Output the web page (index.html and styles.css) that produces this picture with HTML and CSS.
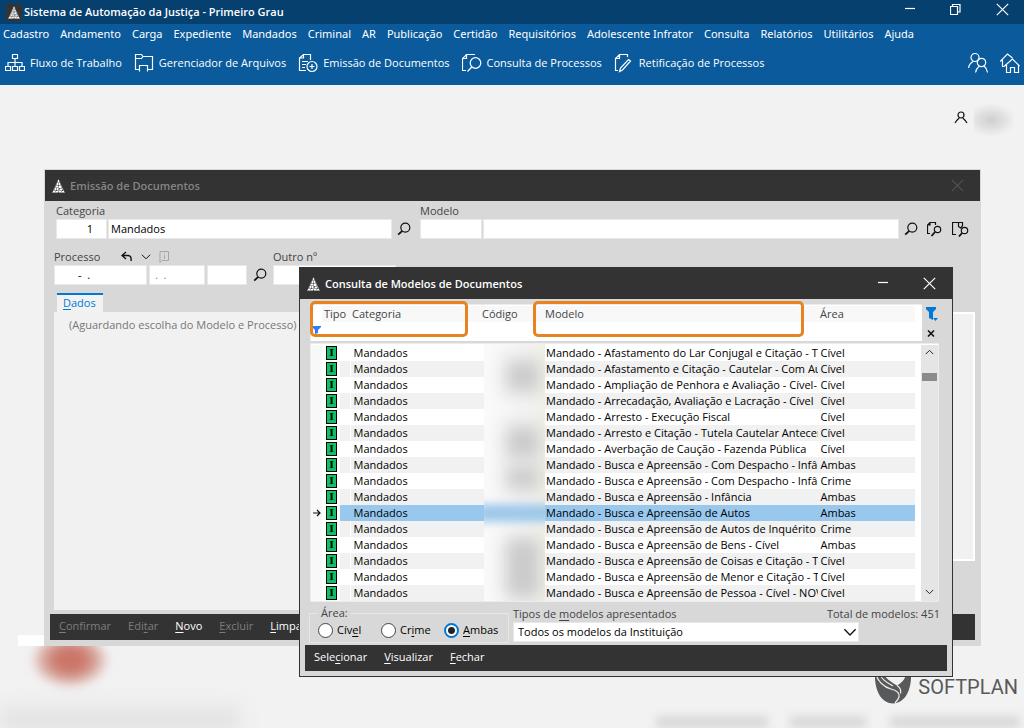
FILE: index.html
```html
<!DOCTYPE html>
<html lang="pt-BR">
<head>
<meta charset="utf-8">
<title>Sistema de Automação da Justiça - Primeiro Grau</title>
<link rel="stylesheet" href="styles.css">
</head>
<body>
<svg class="defs" aria-hidden="true">
  <symbol id="tri" viewBox="0 0 13 14"><path d="M6.5 0L13 14H0z" fill="#a2a2a2"/><path d="M6 1h1v2H6zM5 4h1v2H5zM7 4h1v2H7zM4 7h2v1H4zM7 7h2v2H7zM3 9h1v2H3zM5 9h1v2H5zM8 10h2v1H8zM1 12h2v1H1zM4 12h2v1H4zM7 12h2v1H7zM10 12h2v1h-2z" fill="#fff"/><path d="M6 6h1v1H6zM4 11h1v1H4zM7 9h1v1H7zM6 13h1v1H6zM10 11h1v1h-1z" fill="#555"/></symbol>
  <symbol id="lens" viewBox="0 0 14 14"><circle cx="8.300" cy="5.600" r="4.500"/><path d="M5.300 8.800L1.200 12.600" stroke-width="1.800"/></symbol>
  <symbol id="close" viewBox="0 0 13 13"><path d="M.8.8l11.400 11.400M12.200.8L.8 12.200"/></symbol>
  <symbol id="min" viewBox="0 0 10 13"><path d="M0 5.500h10"/></symbol>
  <symbol id="down" viewBox="0 0 12 8"><path d="M1 1.200l5 5 5-5"/></symbol>
</svg>

<header class="app">
  <div class="app-title">
    <span class="app-logo"><svg width="12" height="13"><use href="#tri"/></svg></span>
    <h1>Sistema de Automação da Justiça - Primeiro Grau</h1>
    <div class="app-controls">
      <button aria-label="Minimizar"><svg class="ln" width="10" height="13"><use href="#min"/></svg></button>
      <button aria-label="Restaurar"><svg class="ln" width="11" height="13" viewBox="0 0 11 13"><path d="M.5 3.500h7v8h-7zM2.500 3.500v-2h7.500v7.500H7.500"/></svg></button>
      <button aria-label="Fechar"><svg class="ln" width="13" height="13"><use href="#close"/></svg></button>
    </div>
  </div>
  <nav class="menu">
    <a href="#">Cadastro</a><a href="#">Andamento</a><a href="#">Carga</a><a href="#">Expediente</a><a href="#">Mandados</a><a href="#">Criminal</a><a href="#">AR</a><a href="#">Publicação</a><a href="#">Certidão</a><a href="#">Requisitórios</a><a href="#">Adolescente Infrator</a><a href="#">Consulta</a><a href="#">Relatórios</a><a href="#">Utilitários</a><a href="#">Ajuda</a>
  </nav>
  <div class="toolbar">
    <button><svg class="ln" width="20" height="20" viewBox="0 0 20 20"><path d="M7.500 1.500h5v4h-5zM.5 13.500h5v4h-5zM7.500 13.500h5v4h-5zM14.500 13.500h5v4h-5zM10 5.500v8M3 13.500v-4h14v4"/></svg>Fluxo de Trabalho</button>
    <button><svg class="ln" width="20" height="20" viewBox="0 0 20 20"><path d="M5 16.500H1.500v-15h6l1.500 2h9.500v13H14M1.500 5.500h6l1.500-2M5.500 18.500v-6h8v6"/></svg>Gerenciador de Arquivos</button>
    <button><svg class="ln" width="20" height="20" viewBox="0 0 20 20"><path d="M8 17.500H1.500V5l4-3.500h7V7M5.500 1.500V5h-4M4 8.500h6M4 11.500h4M4 14.500h3"/><circle cx="14" cy="13.500" r="5"/><path d="M11.500 13.500h5M14 11v5"/></svg>Emissão de Documentos</button>
    <button><svg class="ln" width="20" height="20" viewBox="0 0 20 20"><path d="M4 17.500H.5V5.500l4-4H13M4.500 1.500v4h-4"/><circle cx="13.500" cy="10" r="5.300"/><path d="M9.800 14L5.500 18.500"/></svg>Consulta de Processos</button>
    <button><svg class="ln" width="20" height="20" viewBox="0 0 20 20"><path d="M4 17.500H1.500V5.500l4-4h8V4M5.500 1.500v4h-4M14.500 6.500l2 1.500-8 9-3 1.500 1-3.500z"/></svg>Retificação de Processos</button>
    <span class="toolbar-right">
      <button aria-label="Usuários"><svg class="ln" width="20" height="20" viewBox="0 0 20 20"><circle cx="7" cy="4.500" r="4"/><circle cx="13.500" cy="9.500" r="4.200"/><path d="M.5 15c.5-3 2-5 4.500-6.500M7.500 19.500c.5-3 1.500-4.500 3.500-6M16 13c2 1.500 3 3.500 3.500 6.500"/></svg></button>
      <button aria-label="Início"><svg class="ln" width="20" height="20" viewBox="0 0 20 20"><path d="M4.500 13.500h-2v-6L.5 8l7-7 5 4M4.500 13l8-7 7 7M6.500 12v7.500h4v-5h4v5h4V12"/></svg></button>
    </span>
  </div>
</header>

<main class="desktop">
  <div class="user"><svg class="dark" width="14" height="13" viewBox="0 0 14 13"><circle cx="7" cy="4" r="3"/><path d="M1 12c1.500-2.500 2.500-3.500 4.200-5M13 12c-1.500-2.500-2.500-3.500-4.200-5"/></svg><span class="user-name"></span></div>
  <span class="smudge red"></span><span class="smudge left"></span><span class="chip"></span>
  <span class="smudge s1"></span><span class="smudge s2"></span><span class="smudge s3"></span>
  <div class="brand">
    <svg width="36" height="34" viewBox="0 0 36 34"><path d="M0 2C-1 20 6 33.500 18 33.500S37 20 36 2h-5c0 6-3 10-9 13.500C16 12 10 8 7 2z" fill="#58595b"/><path d="M1 5c3 8 8 12 15 14 6 1.500 9 4 8 8-.5 2-2 4-4 6M22 15.500c3 2 4.500 4 3.500 8M4 2c1 5 6 10 14 14" fill="none" stroke="#f2f2f2" stroke-width="1.200"/></svg>
    <span>SOFTPLAN</span>
  </div>

  <section class="win win-doc">
    <div class="bar"><svg width="13" height="14"><use href="#tri"/></svg><h2>Emissão de Documentos</h2><button class="off" aria-label="Fechar janela"><svg class="ln" width="13" height="13"><use href="#close"/></svg></button></div>
    <div class="doc-row first">
      <div class="field"><label for="cat">Categoria</label><div class="boxes"><input id="cat" class="w-cat num" value="1"><input class="w-catname" aria-label="Nome da categoria" value="Mandados"><button aria-label="Buscar categoria"><svg class="dark" width="14" height="14"><use href="#lens"/></svg></button></div></div>
      <div class="field grow"><label for="mod">Modelo</label><div class="boxes"><input id="mod" class="w-mod"><input class="fill" aria-label="Nome do modelo"><span class="icons"><button aria-label="Buscar modelo"><svg class="dark" width="14" height="14"><use href="#lens"/></svg></button><button aria-label="Visualizar modelo"><svg class="dark" width="16" height="16" viewBox="0 0 16 16"><path d="M3 12.500H.5V4L3 1.500h5.500V4M3 1.500V4H.5"/><circle cx="10.500" cy="8.500" r="3.200"/><path d="M8 11L4.500 15" stroke-width="1.800"/></svg></button><button aria-label="Pesquisar modelo"><svg class="dark" width="18" height="16" viewBox="0 0 18 16"><path d="M4 13.500H.5v-12h10V5M6.500 1.500v4l2 1.500 2-2"/><circle cx="12.500" cy="9.500" r="3.200"/><path d="M10 12l-3 3.500" stroke-width="1.800"/></svg></button></span></div></div>
    </div>
    <div class="doc-row second">
      <div class="field"><div class="lab"><label for="proc">Processo</label><button aria-label="Desfazer"><svg class="dark" width="12" height="12" viewBox="0 0 12 12"><path d="M5 1L1 4.500 5 8M1 4.500h6c2.500 0 3.500 2 3 5.500" stroke-width="1.400"/></svg></button><button aria-label="Mais"><svg class="dark" width="10" height="8"><use href="#down"/></svg></button><button aria-label="Informação"><svg class="pale" width="10" height="12" viewBox="0 0 10 12"><path d="M1 .5h8.500v9H3L1 11.500zM5.500 4v4M5.500 2v1"/></svg></button></div>
      <div class="boxes"><input id="proc" class="w-proc" value="-  ."><input class="w-date" aria-label="Complemento" value=".  ."><input class="w-orig" aria-label="Origem"><button aria-label="Buscar processo"><svg class="dark" width="14" height="14"><use href="#lens"/></svg></button></div></div>
      <div class="field"><label for="outro">Outro nº</label><div class="boxes"><input id="outro" class="w-other"></div></div>
    </div>
    <div class="tabs"><a href="#"><u>D</u>ados</a></div>
    <div class="panel"><p>(Aguardando escolha do Modelo e Processo)</p><div class="side"></div></div>
    <div class="actions"><button disabled><u>C</u>onfirmar</button><button disabled>Edi<u>t</u>ar</button><button><u>N</u>ovo</button><button disabled><u>E</u>xcluir</button><button><u>L</u>impar</button></div>
  </section>

  <section class="win win-query">
    <div class="bar"><svg width="13" height="14"><use href="#tri"/></svg><h2>Consulta de Modelos de Documentos</h2><button class="minimize" aria-label="Minimizar janela"><svg class="ln" width="10" height="13"><use href="#min"/></svg></button><button aria-label="Fechar consulta"><svg class="ln" width="13" height="13"><use href="#close"/></svg></button></div>
    <div class="head">
      <div class="head-grid">
        <div class="titles"><span>Tipo</span><span>Categoria</span><span>Código</span><span>Modelo</span><span>Área</span></div>
        <svg class="mini-filter" width="9" height="8" viewBox="0 0 9 8"><path d="M0 0h9v1L6 4v3L3 8V4L0 1z" fill="#2f7cf6"/></svg>
        <i class="mark-box m1"></i><i class="mark-box m2"></i>
      </div>
      <div class="head-tools"><button aria-label="Filtrar"><svg width="13" height="14" viewBox="0 0 13 14"><path d="M1 0h10v2L8 5v8L4 11V5L1 2zM8 11h5l-2.500 3z" fill="#0078d7"/></svg></button><button aria-label="Limpar filtro"><svg class="dark" width="9" height="9" viewBox="0 0 9 9"><path d="M1 1.500l6 6M7 1.500l-6 6" stroke-width="1.600"/></svg></button></div>
    </div>
    <div class="list">
      <table>
        <colgroup><col class="c-mark"><col class="c-tag"><col class="c-gap"><col class="c-cat"><col class="c-code"><col><col class="c-area"></colgroup>
        <tbody>
        <tr><td></td><td><b>I</b></td><td></td><td>Mandados</td><td></td><td>Mandado - Afastamento do Lar Conjugal e Citação - T</td><td>Cível</td></tr>
        <tr><td></td><td><b>I</b></td><td></td><td>Mandados</td><td></td><td>Mandado - Afastamento e Citação - Cautelar - Com Au</td><td>Cível</td></tr>
        <tr><td></td><td><b>I</b></td><td></td><td>Mandados</td><td></td><td>Mandado - Ampliação de Penhora e Avaliação - Cível-.</td><td>Cível</td></tr>
        <tr><td></td><td><b>I</b></td><td></td><td>Mandados</td><td></td><td>Mandado - Arrecadação, Avaliação e Lacração - Cível</td><td>Cível</td></tr>
        <tr><td></td><td><b>I</b></td><td></td><td>Mandados</td><td></td><td>Mandado - Arresto - Execução Fiscal</td><td>Cível</td></tr>
        <tr><td></td><td><b>I</b></td><td></td><td>Mandados</td><td></td><td>Mandado - Arresto e Citação - Tutela Cautelar Antecer</td><td>Cível</td></tr>
        <tr><td></td><td><b>I</b></td><td></td><td>Mandados</td><td></td><td>Mandado - Averbação de Caução - Fazenda Pública</td><td>Cível</td></tr>
        <tr><td></td><td><b>I</b></td><td></td><td>Mandados</td><td></td><td>Mandado - Busca e Apreensão - Com Despacho - Infâr</td><td>Ambas</td></tr>
        <tr><td></td><td><b>I</b></td><td></td><td>Mandados</td><td></td><td>Mandado - Busca e Apreensão - Com Despacho - Infâr</td><td>Crime</td></tr>
        <tr><td></td><td><b>I</b></td><td></td><td>Mandados</td><td></td><td>Mandado - Busca e Apreensão - Infância</td><td>Ambas</td></tr>
        <tr class="sel"><td><svg class="dark" width="8" height="8" viewBox="0 0 8 8"><path d="M0 4h7M4 1l3 3-3 3"/></svg></td><td><b>I</b></td><td></td><td>Mandados</td><td></td><td>Mandado - Busca e Apreensão de Autos</td><td>Ambas</td></tr>
        <tr><td></td><td><b>I</b></td><td></td><td>Mandados</td><td></td><td>Mandado - Busca e Apreensão de Autos de Inquérito F</td><td>Crime</td></tr>
        <tr><td></td><td><b>I</b></td><td></td><td>Mandados</td><td></td><td>Mandado - Busca e Apreensão de Bens - Cível</td><td>Ambas</td></tr>
        <tr><td></td><td><b>I</b></td><td></td><td>Mandados</td><td></td><td>Mandado - Busca e Apreensão de Coisas e Citação - T</td><td>Cível</td></tr>
        <tr><td></td><td><b>I</b></td><td></td><td>Mandados</td><td></td><td>Mandado - Busca e Apreensão de Menor e Citação - T</td><td>Cível</td></tr>
        <tr><td></td><td><b>I</b></td><td></td><td>Mandados</td><td></td><td>Mandado - Busca e Apreensão de Pessoa - Cível - NOV</td><td>Cível</td></tr>
        </tbody>
      </table>
      <div class="code-mask"><i></i><i></i><i></i><i></i><i></i></div>
      <div class="scroll"><svg class="dark up" width="9" height="6" viewBox="0 0 12 8"><use href="#down"/></svg><span class="thumb"></span><svg class="dark" width="9" height="6" viewBox="0 0 12 8"><use href="#down"/></svg></div>
    </div>
    <div class="options">
      <fieldset><legend>Área:</legend>
        <label><input type="radio" name="area">Cív<u>e</u>l</label><label><input type="radio" name="area">Cr<u>i</u>me</label><label><input type="radio" name="area" checked><span><u>A</u>mbas</span></label>
      </fieldset>
      <div class="types"><div class="types-top"><label for="tipos">Tipos de <u>m</u>odelos apresentados</label><span>Total de modelos: 451</span></div>
      <div class="select"><select id="tipos"><option>Todos os modelos da Instituição</option></select><svg class="dark" width="14" height="9"><use href="#down"/></svg></div></div>
    </div>
    <div class="actions"><button>Sele<u>c</u>ionar</button><button><u>V</u>isualizar</button><button><u>F</u>echar</button></div>
  </section>
</main>
</body>
</html>
```
FILE: styles.css
```css
* { box-sizing: border-box; }
body {
  margin: 0; min-height: 100vh; display: flex; flex-direction: column;
  background: #f2f2f2; color: #000;
  font: 11px/16px "Open Sans", "Noto Sans", sans-serif; overflow: hidden;
}
button, input, select { font: inherit; color: inherit; margin: 0; border-radius: 0; }
button { border: 0; padding: 0; background: none; display: flex; align-items: center; }
a { color: inherit; text-decoration: none; }
h1, h2, p { margin: 0; font-size: 11px; line-height: 16px; }
h1, h2 { font-weight: 600; }
u { text-underline-offset: 2px; }
svg { display: block; flex: none; }
.defs { position: absolute; width: 0; height: 0; }
.ln { fill: none; stroke: #fff; stroke-width: 1.2; }
.dark { fill: none; stroke: #111; stroke-width: 1.2; }
.pale { fill: none; stroke: #a6a6a6; }

.app { background: #0a5a9c; color: #fff; padding-bottom: 3px; }
.app-title { display: flex; align-items: center; height: 24px; background: #06406f; padding: 0 15px 0 6px; gap: 2px; }
.app-logo { width: 16px; height: 17px; background: #333; display: flex; align-items: center; justify-content: center; }
.app-controls { margin-left: auto; display: flex; gap: 35px; padding-bottom: 6px; }
.menu { display: flex; gap: 11px; padding: 2px 3px; white-space: nowrap; font-family: "Noto Sans", "Open Sans", sans-serif; }
.toolbar { display: flex; align-items: center; height: 38px; padding: 0 4px 0 5px; gap: 12px; white-space: nowrap; }
.toolbar button { gap: 5px; }
.toolbar-right { margin-left: auto; display: flex; gap: 12px; }

.desktop { position: relative; flex: 1; overflow: hidden; }
.user { display: flex; align-items: center; justify-content: flex-end; padding: 18px 8px 0 0; gap: 6px; }
.user-name { width: 42px; height: 34px; background: radial-gradient(ellipse at 40% 50%, #cfcfcf, #e0e0e0 35%, #f2f2f2 70%); }
.user svg { margin-bottom: 6px; }

.smudge { position: absolute; filter: blur(7px); }
.red { left: 28px; top: 545px; width: 84px; height: 60px; background: radial-gradient(ellipse, #cb7568 20%, #d39a90 40%, #f2f2f2 68%); filter: blur(4px); }
.left { left: 0; top: 622px; width: 240px; height: 26px; background: #e2e2e2; filter: blur(10px); }
.chip { position: absolute; left: 18px; top: 550px; width: 28px; height: 11px; background: #fff; }
.s1, .s2, .s3 { bottom: 0; height: 12px; background: #d9d9d9; filter: blur(4px); }
.s1 { right: 256px; width: 112px; }
.s2 { right: 158px; width: 76px; }
.s3 { right: 4px; width: 130px; }
.brand { position: absolute; right: 6px; bottom: 24px; display: flex; align-items: center; gap: 7px; color: #58595b; font: 20px/34px Roboto, sans-serif; }

.win { position: absolute; background: #d8d8d8; }
.win-doc { left: 44px; right: 43px; top: 84px; border: 1px solid #d8d8d8; color: #444; padding-bottom: 5px; }
.win-query { left: 299px; right: 71px; top: 182px; border: 1px solid #333; color: #444; padding-bottom: 5px; }
.bar { display: flex; align-items: center; height: 31px; background: #333; color: #fff; padding: 0 16px 0 7px; gap: 5px; }
.bar h2 { flex: 1; }
.bar .minimize { margin-right: 30px; }
.win-doc h2 { color: #858585; }
.off { opacity: .15; }

.doc-row { display: flex; }
.first { padding: 2px 10px 0 11px; gap: 9px; }
.second { padding: 10px 10px 0 9px; gap: 6px; }
.field { display: flex; flex-direction: column; }
.grow { flex: 1; }
.boxes { display: flex; align-items: center; gap: 1px; }
.boxes input { height: 20px; padding: 0 2px 2px; border: 1px solid #e8e8e8; background: #fff; color: #000; min-width: 0; }
.boxes > button { width: 18px; justify-content: flex-end; }
.w-cat { width: 51px; }
.boxes .num { text-align: right; padding-right: 13px; }
.w-catname { width: 284px; }
.w-mod { width: 62px; }
.fill { flex: 1; }
.icons { display: flex; align-items: center; gap: 9px; padding-left: 4px; }
.second .boxes { gap: 2px; }
.boxes .w-proc { width: 93px; padding-left: 23px; white-space: pre; }
.boxes .w-date { width: 56px; padding-left: 5px; color: #888; white-space: pre; }
.w-orig { width: 40px; }
.w-other { width: 123px; }
.lab { display: flex; align-items: center; gap: 8px; height: 16px; }
.lab label { width: 59px; }

.tabs { padding: 8px 0 0 12px; display: flex; }
.tabs a { border-top: 2px solid #0078d7; background: #f2f2f2; color: #0078d7; padding: 0 7px 1px 6px; }
.panel { display: flex; justify-content: space-between; align-items: flex-start; margin: 0 5px 0 9px; height: 298px; background: linear-gradient(to right, #f1f1f1 600px, #d8d8d8 600px); padding-left: 15px; }
.panel p { color: #777; font-weight: 400; padding-top: 5px; }
.side { width: 300px; height: 249px; background: #f1f1f1; border: 2px solid #fff; }
.actions { display: flex; align-items: center; gap: 17px; height: 26px; margin: 4px 5px 0; padding: 0 9px 2px; background: #333; color: #fff; }
.actions button:disabled { color: #7d7d7d; }

.head { display: flex; padding: 5px 12px 0 10px; }
.head-grid { position: relative; flex: 1; height: 37px; background: #fff; border: 1px solid #ececec; border-width: 1px 0 0 1px; padding: 1px 7px 0 11px; }
.titles { display: grid; grid-template-columns: 28px 130px 63px 1fr 95px; background: #f8f8f8; padding-left: 2px; }
.mini-filter { position: absolute; left: 1px; top: 21px; }
.mark-box { position: absolute; top: -4px; height: 36px; border: 3px solid #e8841f; border-radius: 5px; }
.m1 { left: -1px; width: 158px; }
.m2 { left: 222px; width: 271px; }
.head-tools { width: 18px; display: flex; flex-direction: column; align-items: center; gap: 8px; padding-top: 3px; }
.list { position: relative; display: flex; justify-content: space-between; margin: 2px 13px 0 10px; padding-top: 1px; border: 1px solid #ececec; background: #fff; }
table { flex: 1; margin-right: 6px; border-collapse: collapse; table-layout: fixed; width: 100px; color: #000; }
td { height: 16px; padding: 0; white-space: nowrap; }
td svg { margin-left: 2px; }
tr:nth-child(even) td { background: #f1f1f1; }
tr.sel td { background: #99c8ef; }
tr td:first-child, tr.sel td:first-child { background: #f8f8f8; }
tr td:nth-child(2), tr:nth-child(even) td:nth-child(2), tr.sel td:nth-child(2) { background: #fff; padding-left: 4px; }
td:nth-child(3) { border-right: 1px solid #fff; }
.sel td:nth-child(3) { border-color: #99c8ef; }
td:nth-child(4) { padding-left: 3px; }
td:nth-child(6) { overflow: hidden; }
td:nth-child(7) { padding-left: 3px; }
.c-mark { width: 11px; }
.c-tag { width: 18px; }
.c-gap { width: 10px; }
.c-cat { width: 134px; }
.c-code { width: 62px; }
.c-area { width: 97px; }
td b { display: block; width: 11px; height: 14px; border: 1px solid #000; background: #0bc268; font: bold 10px/12px "DejaVu Serif", serif; text-align: center; }
.code-mask { position: absolute; left: 173px; top: 0; width: 61px; height: 257px; overflow: hidden; background: linear-gradient(to right, #fafafa, #f4f4f4 70%, #f0f1e6); }
.code-mask i { position: absolute; left: 22px; width: 34px; height: 24px; background: #c9c9c9; filter: blur(9px); }
.code-mask i:nth-child(1) { top: 16px; height: 32px; }
.code-mask i:nth-child(2) { top: 82px; height: 32px; }
.code-mask i:nth-child(3) { top: 122px; }
.code-mask i:nth-child(4) { left: -6px; top: 160px; width: 74px; height: 18px; background: #9fc8ea; filter: blur(4px); }
.code-mask i:nth-child(5) { top: 194px; height: 60px; }
.scroll { width: 17px; background: #e5e5e5; display: flex; flex-direction: column; align-items: center; padding: 4px 0 6px; }
.scroll .up { transform: rotate(180deg); }
.thumb { width: 15px; height: 8px; background: #8b8b8b; margin: 18px 0 auto; }

.options { display: flex; gap: 4px; padding: 4px 12px 0 9px; }
fieldset { flex: none; width: 200px; min-width: 0; margin: 0; border: 1px solid #e6e6e6; padding: 2px 4px 4px 8px; display: flex; height: 37px; }
legend { padding: 0 3px; line-height: 14px; }
fieldset label { display: flex; align-items: center; height: 16px; width: 63px; flex: none; color: #000; }
fieldset label:last-child { width: 56px; }
fieldset input { appearance: none; flex: none; width: 15px; height: 15px; margin-right: 4px; border: 1px solid #444; border-radius: 50%; background: #fff; }
fieldset input:checked { border: 2px solid #0078d7; background: radial-gradient(circle, #222 3px, #fff 4px); }
.types { flex: 1; }
.types-top { display: flex; justify-content: space-between; }
.select { position: relative; width: 346px; }
.select select { appearance: none; display: block; width: 100%; height: 20px; border: 1px solid #e8e8e8; background: #fff; color: #000; padding: 0 4px; }
.select svg { position: absolute; right: 2px; top: 6px; }
.win-query .actions { margin-top: 2px; }
```
